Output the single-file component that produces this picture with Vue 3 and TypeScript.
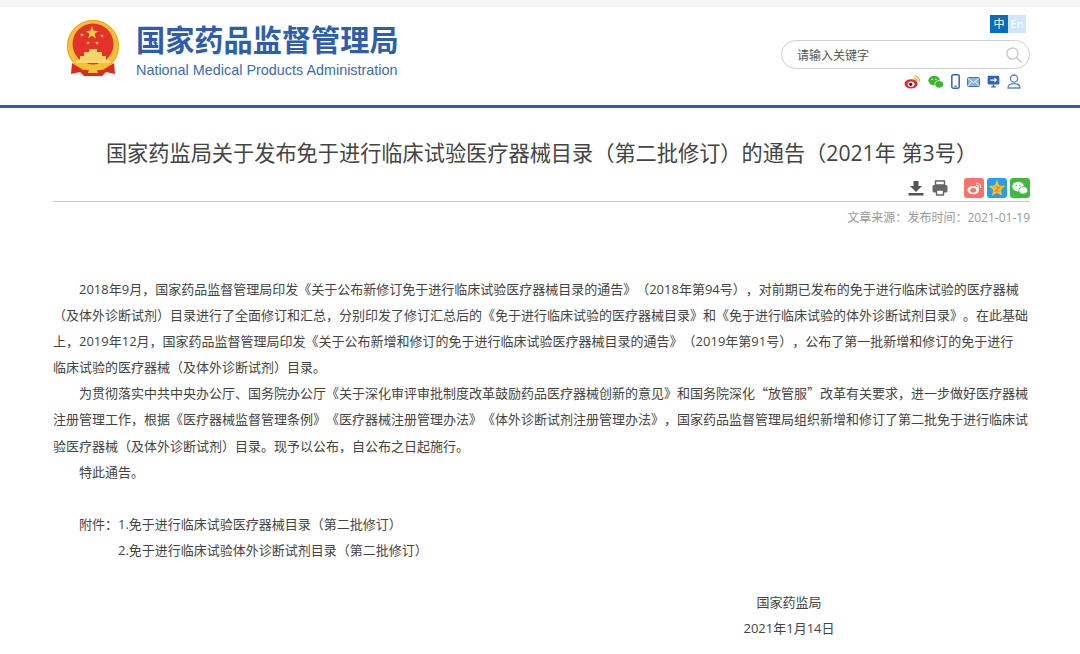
<template>
  <div class="page">
    <div class="top-strip"></div>
    <header class="site-header">
      <div class="brand">
        <svg class="emblem" viewBox="0 0 54 58" width="54" height="58">
          <defs>
            <polygon id="emblem-star" points="0,-5 1.2,-1.6 4.8,-1.5 1.9,0.6 2.9,4 0,2 -2.9,4 -1.9,0.6 -4.8,-1.5 -1.2,-1.6" fill="#f9d342" />
          </defs>
          <circle cx="27" cy="26" r="26" fill="#f6c136" />
          <circle cx="27" cy="26" r="25.5" fill="none" stroke="#e9a51c" stroke-width="1" />
          <circle cx="27" cy="24" r="20.5" fill="#e4312a" />
          <use href="#emblem-star" transform="translate(26 13) scale(1.35)" />
          <use href="#emblem-star" transform="translate(16 15) scale(0.42)" />
          <use href="#emblem-star" transform="translate(36 16) scale(0.42)" />
          <use href="#emblem-star" transform="translate(22 23) scale(0.42)" />
          <use href="#emblem-star" transform="translate(31 23) scale(0.42)" />
          <path d="M23 29 H31 V32 H36 V36 H40 V40 H14 V36 H18 V32 H23 Z" fill="#f7d468" />
          <path d="M10 40 H44 V43 H10 Z" fill="#f8da7c" />
          <path d="M6 43 L17 50 H37 L48 43 L49 54 L40 52 L36 56 H18 L14 52 L5 54 Z" fill="#dc2a20" />
          <path d="M18 44 C21 42 24 45 27 47 C30 45 33 42 36 44 C38 48 34 51 31 50 L32 53 H22 L23 50 C20 51 16 48 18 44 Z" fill="#f6c136" />
        </svg>
        <div class="brand-text">
          <div class="brand-cn">国家药品监督管理局</div>
          <div class="brand-en">National Medical Products Administration</div>
        </div>
      </div>
      <div class="header-tools">
        <div class="lang">
          <span class="lang-zh">中</span>
          <span class="lang-en">En</span>
        </div>
        <div class="search">
          <span class="search-text">请输入关键字</span>
          <svg viewBox="0 0 18 18" width="18" height="18">
            <circle cx="7.5" cy="7.5" r="5.5" fill="none" stroke="#c9c9c9" stroke-width="1.4" />
            <path d="M11.5 11.5 L16.5 16.5" stroke="#c9c9c9" stroke-width="1.6" />
          </svg>
        </div>
        <div class="social">
          <svg viewBox="0 0 18 16" width="17" height="15">
            <ellipse cx="7.5" cy="10.5" rx="7" ry="5" fill="#e6282c" />
            <ellipse cx="7.5" cy="10.8" rx="3.6" ry="2.8" fill="#fff" />
            <circle cx="7" cy="11" r="1.7" fill="#222" />
            <path d="M11 2 A5.5 5.5 0 0 1 16.5 8 M11 4.6 A2.8 2.8 0 0 1 14 7.5" fill="none" stroke="#f2a52a" stroke-width="1.3" />
          </svg>
          <svg viewBox="0 0 17 15" width="16" height="14">
            <ellipse cx="6.5" cy="6" rx="6.2" ry="5.2" fill="#3fb32f" />
            <ellipse cx="12" cy="10" rx="4.8" ry="4" fill="#3fb32f" stroke="#fff" stroke-width="0.8" />
            <circle cx="4.4" cy="4.6" r="0.8" fill="#fff" />
            <circle cx="8.4" cy="4.6" r="0.8" fill="#fff" />
          </svg>
          <svg viewBox="0 0 9 15" width="9" height="15">
            <rect x="0.8" y="0.8" width="7.4" height="13.4" rx="1.4" fill="#fff" stroke="#2f66b5" stroke-width="1.5" />
            <path d="M3 12.2 H6" stroke="#2f66b5" stroke-width="1" />
          </svg>
          <svg viewBox="0 0 14 11" width="13" height="10">
            <rect x="0.5" y="0.5" width="13" height="10" rx="1.4" fill="#8fb2e0" stroke="#2f66b5" stroke-width="1" />
            <path d="M1 1.5 L7 6.3 L13 1.5 M1 9.8 L5 5 M13 9.8 L9 5" fill="none" stroke="#fff" stroke-width="1" />
          </svg>
          <svg viewBox="0 0 14 14" width="13" height="13">
            <rect x="0.7" y="0.7" width="12.6" height="9.6" rx="1.4" fill="#2f66b5" />
            <path d="M3.5 5.5 H10 M8 3.5 L10 5.5 L8 7.5" fill="none" stroke="#fff" stroke-width="1.2" />
            <path d="M4.5 12.8 H9.5 M7 10 V12.8" stroke="#2f66b5" stroke-width="1.5" />
          </svg>
          <svg viewBox="0 0 14 15" width="14" height="15">
            <circle cx="7" cy="4.6" r="3.6" fill="none" stroke="#5f86c6" stroke-width="1.3" />
            <path d="M1 14 C1 10.5 4 9.6 7 9.6 C10 9.6 13 10.5 13 14 Z" fill="none" stroke="#5f86c6" stroke-width="1.3" />
          </svg>
        </div>
      </div>
    </header>
    <div class="blue-rule"></div>

    <main class="article">
      <h1 class="article-title">国家药监局关于发布免于进行临床试验医疗器械目录（第二批修订）的通告（2021年 第3号）</h1>
      <div class="share-row">
        <svg class="tool" viewBox="0 0 16 16" width="16" height="16">
          <path d="M5.5 1 H10.5 V6 H14 L8 12 L2 6 H5.5 Z" fill="#555" />
          <path d="M0.5 13 H15.5 V15.5 H0.5 Z" fill="#555" />
        </svg>
        <svg class="tool print" viewBox="0 0 16 16" width="16" height="16">
          <path d="M3.5 1 H12.5 V5 H3.5 Z" fill="#fff" stroke="#666" stroke-width="1.5" />
          <rect x="0.5" y="5" width="15" height="7.5" rx="1.5" fill="#666" />
          <path d="M4.5 10 H11.5 V15 H4.5 Z" fill="#fff" stroke="#666" stroke-width="1.4" />
        </svg>
        <span class="share-btn weibo">
          <svg viewBox="0 0 18 16" width="15" height="14">
            <ellipse cx="7.5" cy="10.5" rx="7" ry="5" fill="#fff" />
            <ellipse cx="7.5" cy="10.8" rx="3.6" ry="2.8" fill="#fa7268" />
            <path d="M11 2 A5.5 5.5 0 0 1 16.5 8 M11 4.6 A2.8 2.8 0 0 1 14 7.5" fill="none" stroke="#fff" stroke-width="1.3" />
          </svg>
        </span>
        <span class="share-btn qzone">
          <svg viewBox="0 0 18 18" width="18" height="18">
            <polygon points="9,1 11.4,6.4 17.2,7 12.8,11 14.1,16.8 9,13.8 3.9,16.8 5.2,11 0.8,7 6.6,6.4" fill="#f9c42a" />
            <path d="M6.5 8 H11.5 L7 12 H12" fill="none" stroke="#e9822a" stroke-width="1.2" />
          </svg>
        </span>
        <span class="share-btn wechat">
          <svg viewBox="0 0 17 15" width="16" height="14">
            <ellipse cx="6.5" cy="6" rx="6.2" ry="5.2" fill="#fff" />
            <ellipse cx="12" cy="10" rx="4.8" ry="4" fill="#fff" stroke="#3fbb3b" stroke-width="0.8" />
            <circle cx="4.4" cy="4.6" r="0.8" fill="#3fbb3b" />
            <circle cx="8.4" cy="4.6" r="0.8" fill="#3fbb3b" />
          </svg>
        </span>
      </div>
      <div class="meta">
        <span>文章来源：</span>
        <span>发布时间：2021-01-19</span>
      </div>

      <div class="body">
        <p class="para">2018年9月，国家药品监督管理局印发《关于公布新修订免于进行临床试验医疗器械目录的通告》（2018年第94号），对前期已发布的免于进行临床试验的医疗器械（及体外诊断试剂）目录进行了全面修订和汇总，分别印发了修订汇总后的《免于进行临床试验的医疗器械目录》和《免于进行临床试验的体外诊断试剂目录》。在此基础上，2019年12月，国家药品监督管理局印发《关于公布新增和修订的免于进行临床试验医疗器械目录的通告》（2019年第91号），公布了第一批新增和修订的免于进行<br />临床试验的医疗器械（及体外诊断试剂）目录。</p>
        <p class="para para-cjk">为贯彻落实中共中央办公厅、国务院办公厅《关于深化审评审批制度改革鼓励药品医疗器械创新的意见》和国务院深化“放管服”改革有关要求，进一步做好医疗器械注册管理工作，根据《医疗器械监督管理条例》《医疗器械注册管理办法》《体外诊断试剂注册管理办法》，国家药品监督管理局组织新增和修订了第二批免于进行临床试验医疗器械（及体外诊断试剂）目录。现予以公布，自公布之日起施行。</p>
        <p class="para">特此通告。</p>
        <div class="attachments">
          <p v-for="item in attachments" :key="item.text" class="attachment">
            <span class="attachment-label">{{ item.label }}</span>{{ item.text }}
          </p>
        </div>
        <div class="signature">
          <p class="sign-org">国家药监局</p>
          <p class="sign-date">2021年1月14日</p>
        </div>
      </div>
    </main>
  </div>
</template>

<script setup lang="ts">
const attachments = [
  { label: '附件：', text: '1.免于进行临床试验医疗器械目录（第二批修订）' },
  { label: '', text: '2.免于进行临床试验体外诊断试剂目录（第二批修订）' },
];
</script>

<style>
html,
body {
  margin: 0;
  background: #fff;
}
</style>

<style scoped>
.page {
  width: 1080px;
  height: 654px;
  overflow: hidden;
  font-family: "Open Sans", "Noto Sans CJK SC", sans-serif;
  text-spacing-trim: space-all;
  color: #444;
}
.top-strip {
  height: 7px;
  background: #f6f6f6;
}
.site-header {
  height: 98px;
  box-sizing: border-box;
  padding: 0 50px 0 66px;
  display: flex;
  justify-content: space-between;
}
.brand {
  display: flex;
  gap: 16px;
  padding-top: 13px;
}
.emblem {
  display: block;
}
.brand-cn {
  font-size: 29.2px;
  line-height: 40px;
  font-weight: 700;
  color: #2f5dab;
  white-space: nowrap;
}
.brand-en {
  font-family: "Liberation Sans", sans-serif;
  font-size: 14.4px;
  line-height: 20px;
  color: #3d6ab3;
  white-space: nowrap;
}
.header-tools {
  width: 249px;
  display: flex;
  flex-direction: column;
  align-items: flex-end;
}
.lang {
  display: flex;
  margin-top: 8px;
  margin-right: 4px;
  font-size: 11px;
  line-height: 18px;
}
.lang-zh,
.lang-en {
  width: 18px;
  text-align: center;
  color: #fff;
}
.lang-zh {
  background: #0a6cbd;
}
.lang-en {
  background: #cfe6fb;
}
.search {
  margin-top: 7px;
  width: 249px;
  height: 29px;
  box-sizing: border-box;
  border: 1px solid #cfcfcf;
  border-radius: 15px;
  padding: 0 6px 0 15px;
  display: flex;
  align-items: center;
  justify-content: space-between;
}
.search-text {
  font-size: 12px;
  color: #555;
}
.social {
  margin-top: 5px;
  margin-right: 9px;
  display: flex;
  align-items: center;
  gap: 7px;
}
.social svg {
  display: block;
}
.blue-rule {
  height: 3px;
  background: #2f5dab;
}
.article {
  padding: 0 50px 0 53px;
}
.article-title {
  margin: 30px 0 0;
  font-size: 21.2px;
  line-height: 30px;
  font-weight: 400;
  text-align: center;
  color: #444;
  white-space: nowrap;
}
.share-row {
  margin-top: 8px;
  height: 26px;
  box-sizing: border-box;
  padding-bottom: 1px;
  border-bottom: 1px solid #c6c6c6;
  display: flex;
  justify-content: flex-end;
  align-items: center;
  gap: 3px;
}
.tool {
  display: block;
}
.print {
  margin-left: 5px;
  margin-right: 13px;
}
.share-btn {
  width: 20px;
  height: 20px;
  border-radius: 3px;
  display: flex;
  align-items: center;
  justify-content: center;
}
.weibo {
  background: #fa7268;
}
.qzone {
  background: #2b9ded;
}
.wechat {
  background: #3fbb3b;
}
.meta {
  margin-top: 6px;
  display: flex;
  justify-content: flex-end;
  font-size: 12px;
  line-height: 20px;
  color: #999;
}
.body {
  margin-top: 48px;
  font-size: 13px;
  line-height: 26.1px;
  color: #444;
}
.para {
  margin: 0;
  text-indent: 26px;
}
.para-cjk {
  font-family: "Noto Sans CJK SC", sans-serif;
}
.attachments {
  margin-top: 26px;
}
.attachment {
  margin: 0;
  padding-left: 26px;
}
.attachment-label {
  display: inline-block;
  width: 39px;
}
.signature {
  margin-top: 26px;
  padding-left: 681px;
  text-align: center;
  width: 110px;
}
.sign-org,
.sign-date {
  margin: 0;
  white-space: nowrap;
}
</style>
